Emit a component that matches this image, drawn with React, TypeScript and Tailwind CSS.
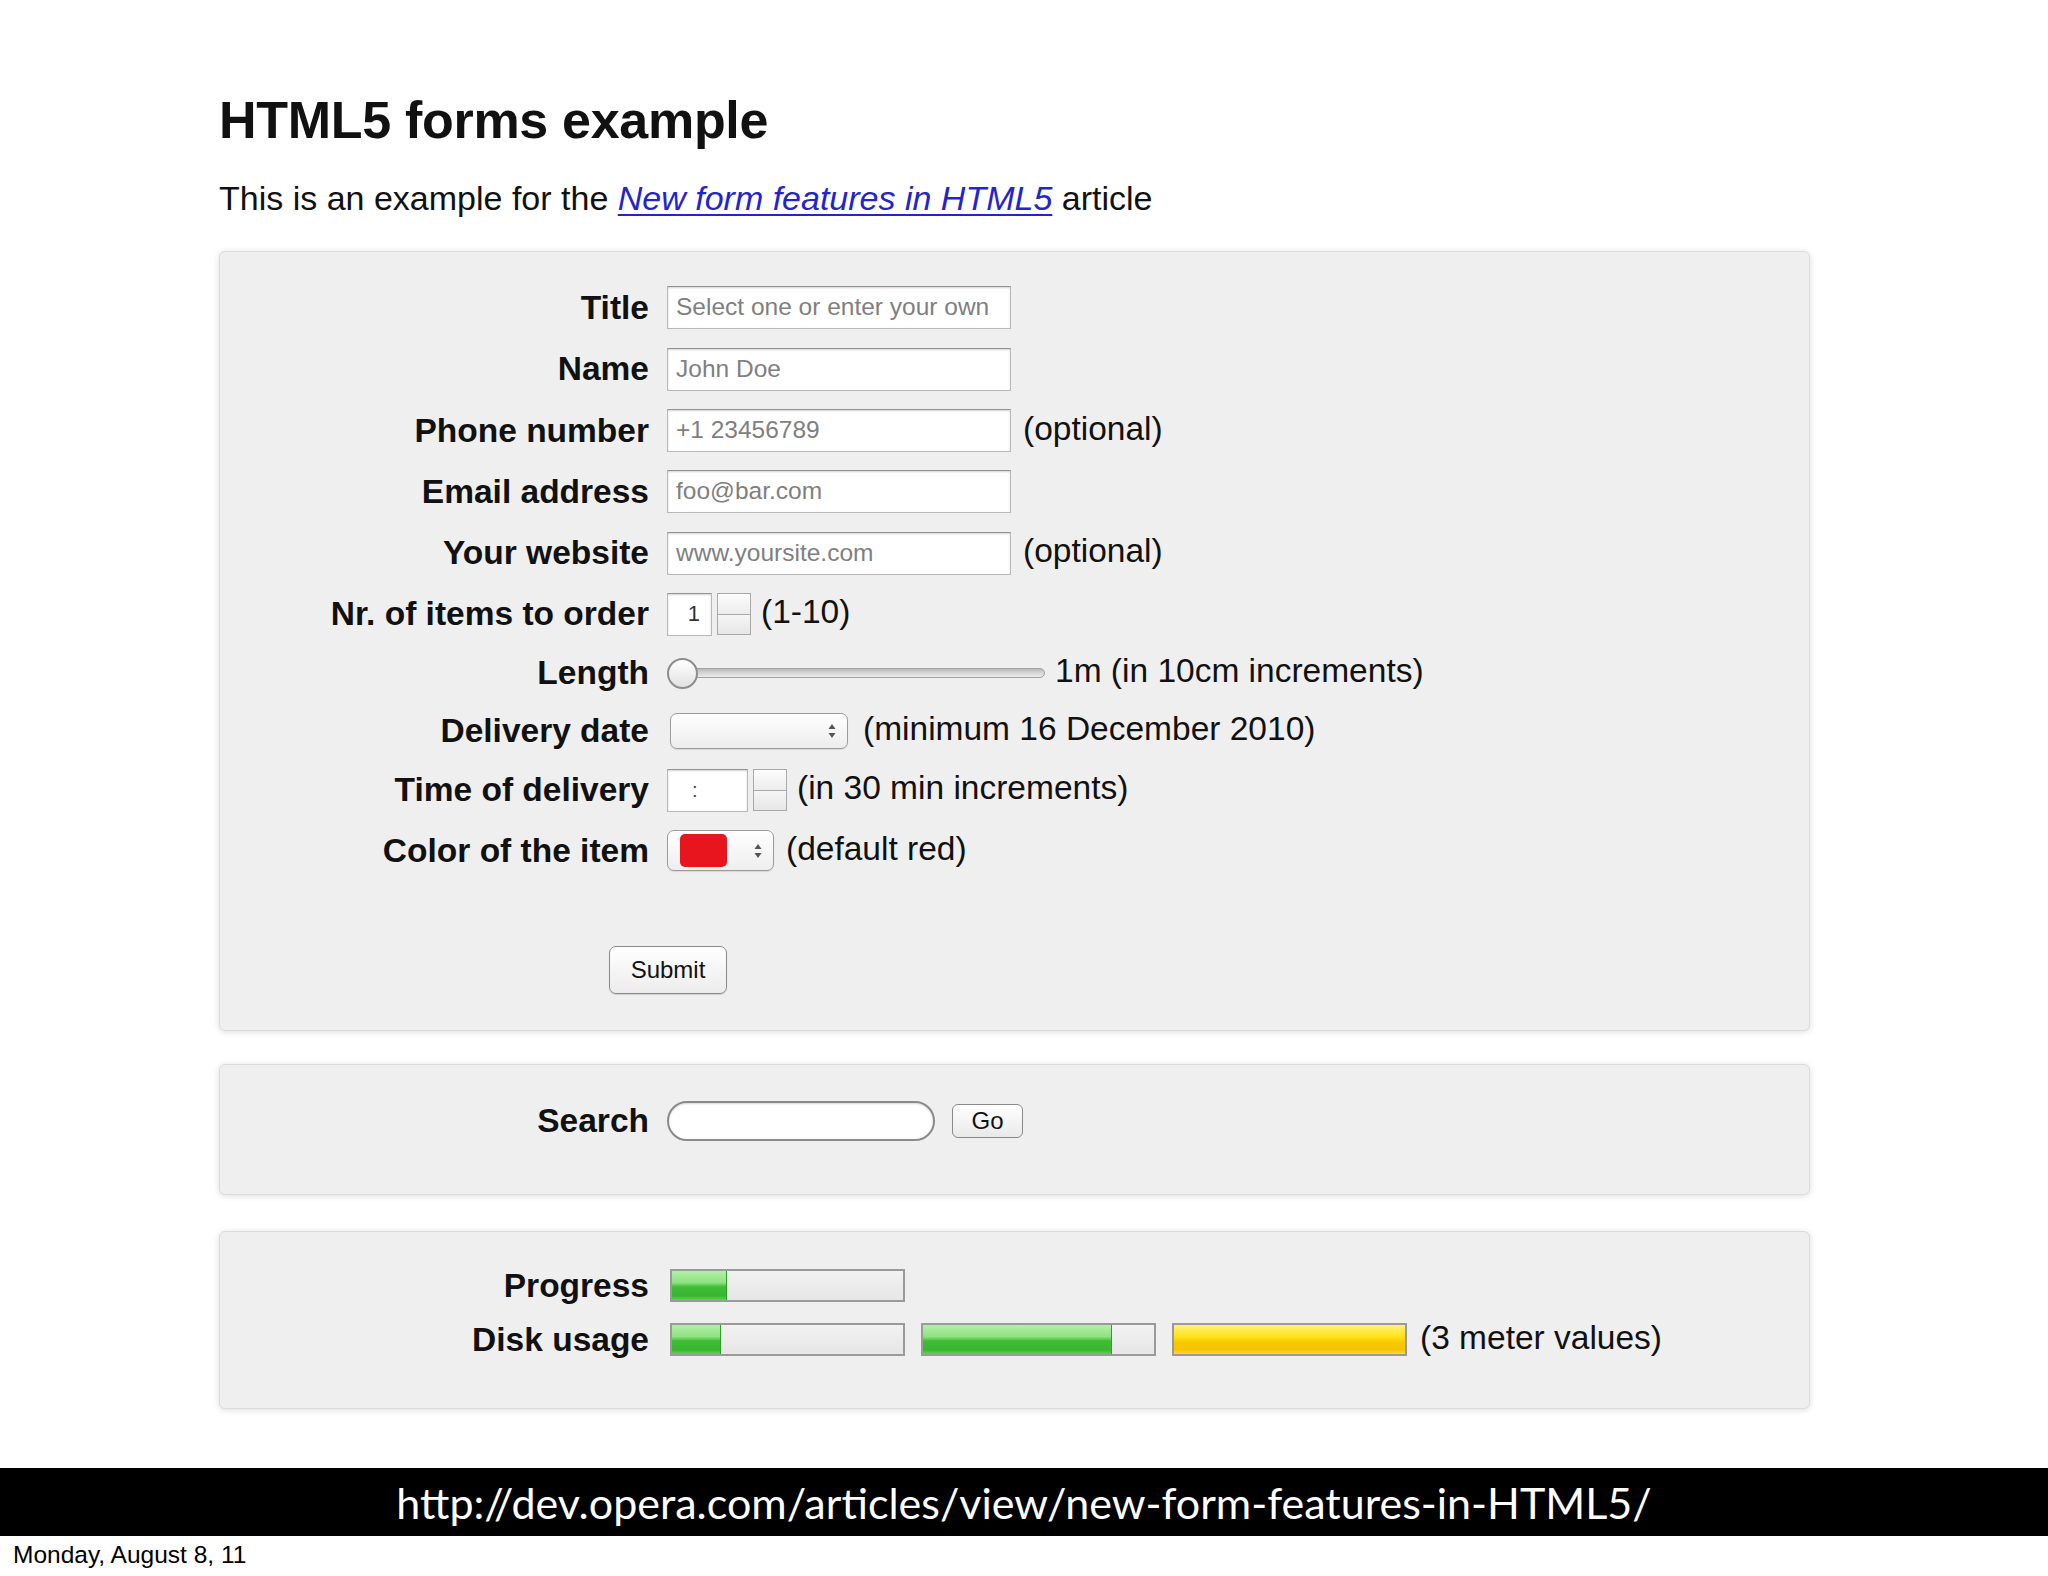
import React from "react";

const inputBox =
  "h-[43px] border border-[#b9b9b9] border-t-[#939393] bg-white shadow-[inset_0_1px_2px_rgba(0,0,0,0.18)]";

function Arrows() {
  return (
    <svg width="10" height="18" viewBox="0 0 10 18" aria-hidden="true">
      <path d="M5 2 L8.5 7 L1.5 7 Z" fill="#555" />
      <path d="M5 16 L8.5 11 L1.5 11 Z" fill="#555" />
    </svg>
  );
}

function Spinner() {
  return (
    <div className="flex h-[42px] w-[34px] flex-col border border-[#a9a9a9]">
      <div className="flex-1 border-b border-[#a9a9a9] bg-gradient-to-b from-[#fdfdfd] to-[#ececec]" />
      <div className="flex-1 bg-gradient-to-b from-[#f6f6f6] to-[#e6e6e6]" />
    </div>
  );
}

function Row({
  label,
  height = "h-[61px]",
  children,
}: {
  label: string;
  height?: string;
  children: React.ReactNode;
}) {
  return (
    <div className={`flex items-center ${height}`}>
      <label className="w-[429px] shrink-0 text-right text-[33.5px] font-bold leading-[38px]">
        {label}
      </label>
      <div className="ml-[18px] flex items-center">{children}</div>
    </div>
  );
}

function Note({ gap = "ml-[12px]", children }: { gap?: string; children: React.ReactNode }) {
  return <span className={`${gap} -mt-[4px] text-[33.5px] leading-[38px]`}>{children}</span>;
}

function TextInput({ placeholder }: { placeholder: string }) {
  return (
    <div className={`${inputBox} flex w-[344px] items-center px-[8px]`}>
      <span className="text-[24.5px] leading-none text-[#7f7f7f]">{placeholder}</span>
    </div>
  );
}

function Bar({ fill, color = "green" }: { fill: number; color?: "green" | "yellow" }) {
  const fillClass =
    color === "green"
      ? "bg-[linear-gradient(to_bottom,#b4f0a8_0%,#8ee282_40%,#3fbe35_55%,#37b52e_85%,#5fd256_100%)] border-r border-[#2f9d2a]"
      : "bg-[linear-gradient(to_bottom,#fff27a_0%,#ffe21a_40%,#f8c800_60%,#f6c300_85%,#ffd93a_100%)]";
  return (
    <div className="flex h-[33px] w-[235px] border-2 border-[#9a9a9a] bg-gradient-to-b from-[#f2f2f2] to-[#e6e6e6]">
      <div className={`h-full ${fillClass}`} style={{ width: `${fill}%` }} />
    </div>
  );
}

const panel =
  "w-[1591px] rounded-[6px] border border-[#dcdcdc] bg-[#efefef] shadow-[0_1px_6px_rgba(0,0,0,0.14)]";

export default function App() {
  return (
    <div className="min-h-[1576px] bg-white font-['Liberation_Sans',Arial,sans-serif] text-[#111]">
      <div className="pl-[219px] pt-[94px]">
        <h1 className="text-[52px] font-bold leading-[52px] tracking-[-0.3px]">HTML5 forms example</h1>
        <p className="mt-[35px] text-[34px] leading-[34px]">
          This is an example for the{" "}
          <a className="italic text-[#2424c9] underline decoration-2 underline-offset-[4px]">
            New form features in HTML5
          </a>{" "}
          article
        </p>

        <form className={`${panel} mt-[36px] pb-[36px] pt-[25px]`}>
          <Row label="Title">
            <TextInput placeholder="Select one or enter your own" />
          </Row>
          <Row label="Name" height="h-[62px]">
            <TextInput placeholder="John Doe" />
          </Row>
          <Row label="Phone number">
            <TextInput placeholder="+1 23456789" />
            <Note>(optional)</Note>
          </Row>
          <Row label="Email address">
            <TextInput placeholder="foo@bar.com" />
          </Row>
          <Row label="Your website" height="h-[62px]">
            <TextInput placeholder="www.yoursite.com" />
            <Note>(optional)</Note>
          </Row>
          <Row label="Nr. of items to order" height="h-[60px]">
            <div className={`${inputBox} flex h-[42px] w-[45px] items-center justify-end pr-[11px]`}>
              <span className="text-[22px] leading-none text-[#333]">1</span>
            </div>
            <div className="ml-[5px]">
              <Spinner />
            </div>
            <Note gap="ml-[10px]">(1-10)</Note>
          </Row>
          <Row label="Length" height="h-[58px]">
            <div className="relative flex h-[31px] w-[378px] items-center">
              <div className="h-[10px] w-full rounded-full border border-[#a2a2a2] bg-gradient-to-b from-[#b9b9b9] via-[#d6d6d6] to-[#ebebeb]" />
              <div className="absolute left-0 top-0 size-[31px] rounded-full border-2 border-[#8d8d8d] bg-gradient-to-b from-white to-[#e2e2e2]" />
            </div>
            <Note gap="ml-[10px]">1m (in 10cm increments)</Note>
          </Row>
          <Row label="Delivery date" height="h-[58px]">
            <div className="ml-[3px] flex h-[36px] w-[178px] items-center justify-end rounded-[7px] border border-[#9c9c9c] bg-gradient-to-b from-white to-[#ededed] pr-[10px] shadow-[0_1px_1px_rgba(0,0,0,0.1)]">
              <Arrows />
            </div>
            <Note gap="ml-[15px]">(minimum 16 December 2010)</Note>
          </Row>
          <Row label="Time of delivery" height="h-[60px]">
            <div className={`${inputBox} flex h-[42px] w-[81px] items-center pl-[24px]`}>
              <span className="text-[20px] leading-none text-[#444]">:</span>
            </div>
            <div className="ml-[5px]">
              <Spinner />
            </div>
            <Note gap="ml-[10px]">(in 30 min increments)</Note>
          </Row>
          <Row label="Color of the item">
            <div className="flex h-[41px] w-[107px] items-center rounded-[7px] border border-[#9c9c9c] bg-gradient-to-b from-white to-[#eeeeee] pl-[12px] shadow-[0_1px_1px_rgba(0,0,0,0.1)]">
              <div className="h-[33px] w-[47px] rounded-[5px] bg-[#e8141e]" />
              <div className="ml-[26px] flex">
                <Arrows />
              </div>
            </div>
            <Note>(default red)</Note>
          </Row>

          <div className="ml-[389px] mt-[65px]">
            <button
              type="button"
              className="h-[48px] w-[118px] rounded-[7px] border border-[#8a8a8a] bg-gradient-to-b from-white to-[#ececec] text-[24px] leading-none text-[#111] shadow-[0_1px_1px_rgba(0,0,0,0.12)]"
            >
              Submit
            </button>
          </div>
        </form>

        <div className={`${panel} mt-[33px] pb-[53px] pt-[36px]`}>
          <div className="flex h-[40px] items-center">
            <label className="w-[429px] shrink-0 text-right text-[33.5px] font-bold leading-[38px]">Search</label>
            <div className="ml-[18px] h-[40px] w-[268px] rounded-full border-2 border-[#8a8a8a] bg-white shadow-[inset_0_1px_2px_rgba(0,0,0,0.15)]" />
            <button
              type="button"
              className="ml-[17px] h-[34px] w-[71px] rounded-[6px] border border-[#8a8a8a] bg-gradient-to-b from-white to-[#e9e9e9] text-[24px] leading-none text-[#111]"
            >
              Go
            </button>
          </div>
        </div>

        <div className={`${panel} mt-[36px] pb-[52px] pt-[37px]`}>
          <div className="flex h-[33px] items-center">
            <label className="w-[429px] shrink-0 text-right text-[33.5px] font-bold leading-[38px]">Progress</label>
            <div className="ml-[21px]">
              <Bar fill={24} />
            </div>
          </div>
          <div className="mt-[21px] flex h-[33px] items-center">
            <label className="w-[429px] shrink-0 text-right text-[33.5px] font-bold leading-[38px]">Disk usage</label>
            <div className="ml-[21px] flex items-center gap-[16px]">
              <Bar fill={21} />
              <Bar fill={82} />
              <Bar fill={100} color="yellow" />
            </div>
            <span className="ml-[13px] -mt-[4px] text-[33.5px] leading-[38px]">(3 meter values)</span>
          </div>
        </div>
      </div>

      <div className="mt-[59px] flex h-[68px] items-center justify-center bg-black">
        <span className="font-['Lato',sans-serif] text-[43px] leading-none text-white">
          http://dev.opera.com/articles/view/new-form-features-in-HTML5/
        </span>
      </div>
      <div className="mt-[6px] pl-[13px] text-[24.5px] leading-[25px] text-black">Monday, August 8, 11</div>
    </div>
  );
}
